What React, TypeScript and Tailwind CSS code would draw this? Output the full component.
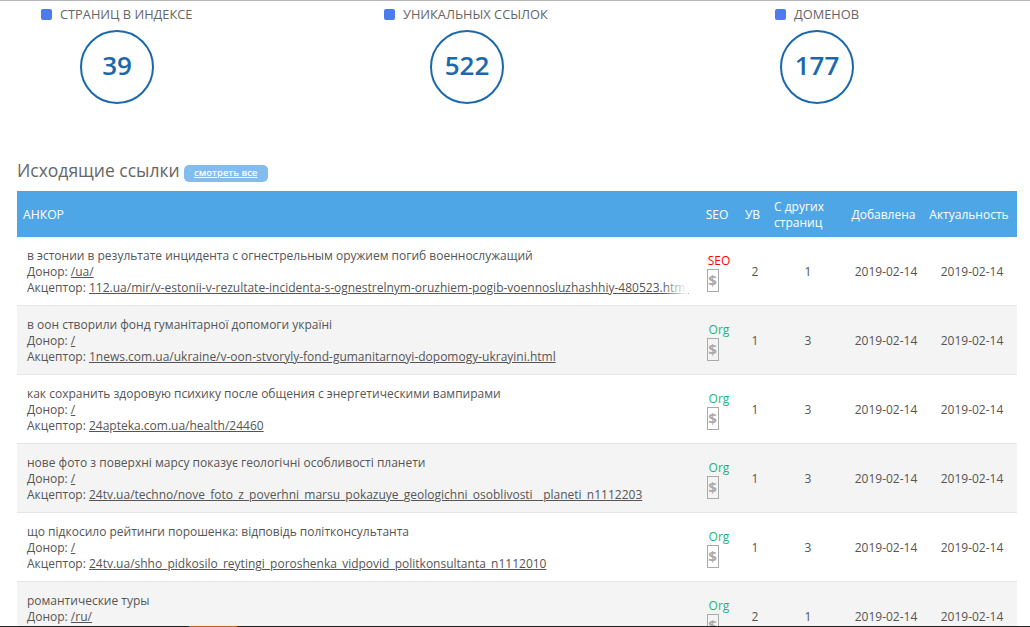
const rows = [
  { a: "в эстонии в результате инцидента с огнестрельным оружием погиб военнослужащий", d: "/ua/", u: "112.ua/mir/v-estonii-v-rezultate-incidenta-s-ognestrelnym-oruzhiem-pogib-voennosluzhashhiy-480523.html", t: "SEO", uv: 2, o: 1 },
  { a: "в оон створили фонд гуманітарної допомоги україні", d: "/", u: "1news.com.ua/ukraine/v-oon-stvoryly-fond-gumanitarnoyi-dopomogy-ukrayini.html", t: "Org", uv: 1, o: 3 },
  { a: "как сохранить здоровую психику после общения с энергетическими вампирами", d: "/", u: "24apteka.com.ua/health/24460", t: "Org", uv: 1, o: 3 },
  { a: "нове фото з поверхні марсу показує геологічні особливості планети", d: "/", u: "24tv.ua/techno/nove_foto_z_poverhni_marsu_pokazuye_geologichni_osoblivosti__planeti_n1112203", t: "Org", uv: 1, o: 3 },
  { a: "що підкосило рейтинги порошенка: відповідь політконсультанта", d: "/", u: "24tv.ua/shho_pidkosilo_reytingi_poroshenka_vidpovid_politkonsultanta_n1112010", t: "Org", uv: 1, o: 3 },
  { a: "романтические туры", d: "/ru/", u: "", t: "Org", uv: 2, o: 1 },
];

const labels = [
  { label: "СТРАНИЦ В ИНДЕКСЕ", w: "w-[343px]" },
  { label: "УНИКАЛЬНЫХ ССЫЛОК", w: "w-[391px]" },
  { label: "ДОМЕНОВ", w: "w-[200px]" },
];
const values = ["39", "522", "177"];

const cols = "grid grid-cols-[680px_40px_34px_76px_73px_97px]";

export default function App() {
  return (
    <div className="relative h-[627px] w-[1030px] overflow-hidden bg-white font-['Open_Sans',sans-serif] text-[12px] text-[#555]">
      <div className="h-px bg-[#b5b5b5]" />
      <div className="flex pl-[41px] pt-[5px]">
        {labels.map((s) => (
          <div key={s.label} className={`${s.w} flex items-center gap-[8px] text-[12.8px] leading-[16px] text-[#666]`}>
            <span className="h-[11px] w-[11px] rounded-[2px] bg-[#4b7bec]" />
            {s.label}
          </div>
        ))}
      </div>
      <div className="ml-[80px] mt-[8px] flex gap-[276px]">
        {values.map((v) => (
          <div key={v} className="flex h-[74px] w-[74px] items-center justify-center rounded-full border-2 border-[#1a69ab] pb-[4px] text-[26px] font-semibold text-[#1a69ab]">
            {v}
          </div>
        ))}
      </div>
      <div className="ml-[17px] mt-[53px] flex h-[28px] items-center">
        <span className="-mt-[2px] text-[17.5px] leading-[28px] text-[#666]">Исходящие ссылки</span>
        <a className="ml-[4px] mt-[4px] flex h-[17px] w-[84px] items-center justify-center rounded-[5px] bg-[#82bded] text-[9.5px] font-semibold text-white underline">
          смотреть все
        </a>
      </div>
      <div className="ml-[17px] w-[1000px]">
        <div className={`${cols} mt-[6px] h-[46px] items-center bg-[#4fa6e6] pt-[2px] text-[12px] leading-[16px] text-white`}>
          <div className="pl-[6px] text-[12.2px]">АНКОР</div>
          <div className="text-center">SEO</div>
          <div className="pr-[3px] text-center">УВ</div>
          <div className="pl-[3px]">С других страниц</div>
          <div className="text-center">Добавлена</div>
          <div className="pl-[1px] text-center">Актуальность</div>
        </div>
        {rows.map((r, i) => (
          <div key={i} className={`${cols} h-[69px] items-center border-b border-[#e6e6e6] ${i % 2 ? "bg-[#f4f4f4]" : "bg-white"}`}>
            <div className="relative h-[69px] overflow-hidden pl-[10px] pt-[11px] leading-[16px]">
              <div>{r.a}</div>
              <div>Донор: <a className="underline">{r.d}</a></div>
              {r.u && <div className="whitespace-nowrap">Акцептор: <a className="underline">{r.u}</a></div>}
              {i === 0 && <div className="absolute right-[9px] top-[40px] h-[20px] w-[26px] bg-gradient-to-r from-transparent to-white" />}
            </div>
            <div className="flex flex-col items-center pl-[4px] pt-[1px] leading-[16px]">
              <span className={r.t === "SEO" ? "text-[#f00]" : "text-[#1db37b]"}>{r.t}</span>
              <span className="-ml-[13px] flex h-[23px] w-[12px] items-center justify-center border border-[#aaa] text-[15px] font-bold text-[#aaa]">$</span>
            </div>
            <div className="pl-[2px] text-center">{r.uv}</div>
            <div className="pr-[2px] text-center">{r.o}</div>
            <div className="pl-[5px] text-center">2019-02-14</div>
            <div className="pl-[7px] text-center">2019-02-14</div>
          </div>
        ))}
      </div>
      <div className="absolute bottom-0 left-0 flex h-px w-full bg-[#222]">
        <div className="ml-[189px] w-[48px] bg-[#b5651d]" />
      </div>
    </div>
  );
}
